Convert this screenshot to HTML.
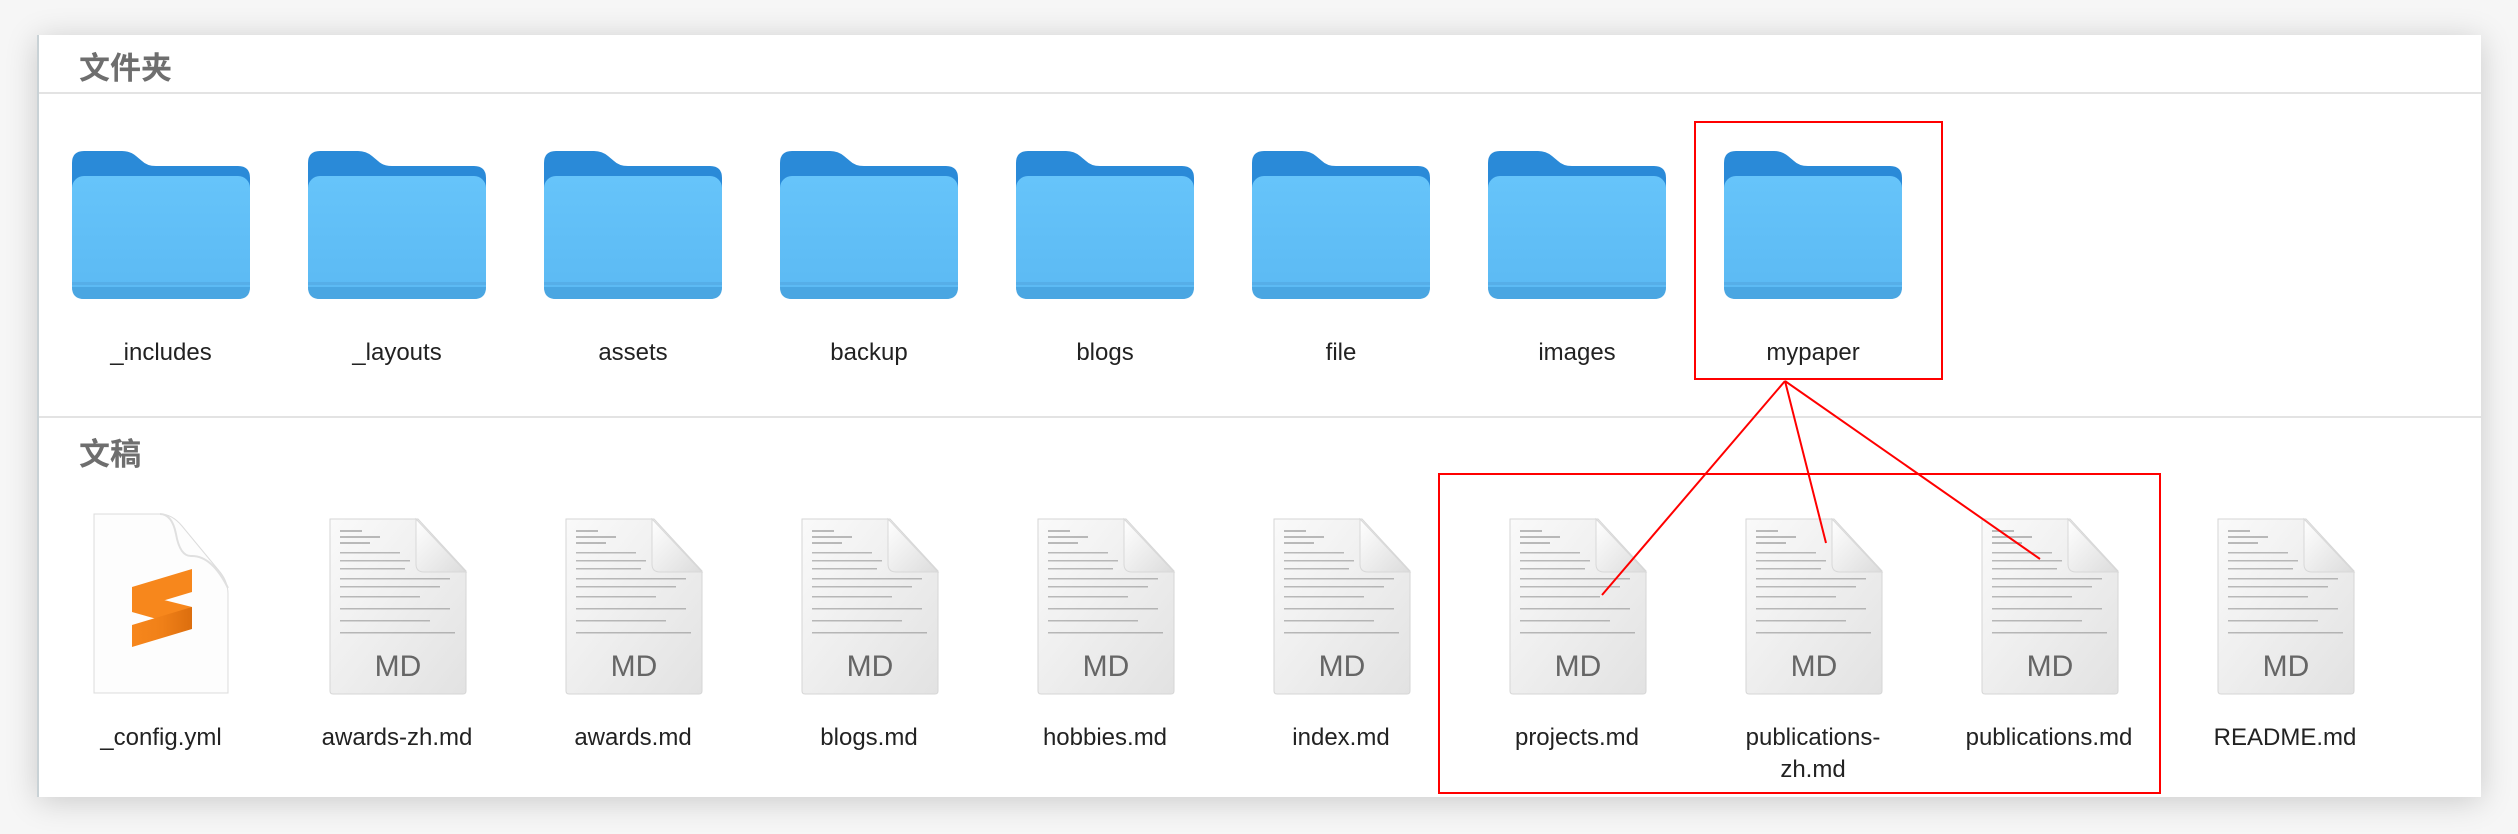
<!DOCTYPE html>
<html><head><meta charset="utf-8"><style>
*{margin:0;padding:0;box-sizing:border-box}
body{width:2518px;height:834px;background:#f6f6f6;position:relative;overflow:hidden;font-family:"Liberation Sans","Noto Sans CJK SC",sans-serif}
.win{position:absolute;left:37px;top:35px;width:2444px;height:762px;background:#fff;box-shadow:0 4px 30px rgba(0,0,0,.18);border-left:2px solid #c9d2d6}
.h{position:absolute;left:40px;font-size:31px;font-weight:bold;color:#6e6e6e}
.sep{position:absolute;left:0;right:0;height:2px;background:#e3e3e3}
.it{position:absolute;width:236px;text-align:center;font-size:24px;color:#222;line-height:32px}
.ic{position:absolute}
</style></head><body>
<svg width="0" height="0" style="position:absolute">
<defs>
<linearGradient id="fg" x1="0" y1="0" x2="0" y2="1"><stop offset="0" stop-color="#66c4fa"/><stop offset="1" stop-color="#5bb9f3"/></linearGradient>
<linearGradient id="dg" x1="0" y1="0" x2="1" y2="1"><stop offset="0" stop-color="#fafafa"/><stop offset="1" stop-color="#e2e2e2"/></linearGradient>
<linearGradient id="cg" x1="0" y1="0" x2="1" y2="1"><stop offset="0" stop-color="#ffffff"/><stop offset="1" stop-color="#dcdcdc"/></linearGradient>
<linearGradient id="og" x1="0" y1="0" x2="1" y2="0"><stop offset="0" stop-color="#f7871c"/><stop offset=".5" stop-color="#f08018"/><stop offset="1" stop-color="#dc6e0e"/></linearGradient>
<symbol id="folder" viewBox="0 0 178 149">
<path d="M0 12 Q0 0 12 0 H50 Q58 0 64 5 L70 10 Q75 15 84 15 H166 Q178 15 178 27 V60 H0Z" fill="#2a8ad8"/>
<rect x="0" y="25" width="178" height="123" rx="12" fill="url(#fg)"/>
<rect x="0" y="131" width="178" height="3" fill="#56aee8"/>
<path d="M0 136 H178 V136 Q178 148 166 148 H12 Q0 148 0 136Z" fill="#4aa6e2"/>
</symbol>
<symbol id="doc" viewBox="0 0 140 180">
<path d="M2 3 H90 L138 55 V175 Q138 178 135 178 H5 Q2 178 2 175Z" fill="url(#dg)" stroke="#d6d6d6" stroke-width="1"/>
<path d="M88 3 V48 Q88 56 96 56 H138 Z" fill="url(#cg)" stroke="#d8d8d8"/>
<g fill="#888" opacity=".55">
<rect x="12" y="14" width="22" height="2"/><rect x="12" y="20" width="40" height="2"/><rect x="12" y="26" width="30" height="2"/>
<rect x="12" y="36" width="60" height="1.5"/><rect x="12" y="44" width="70" height="1.5"/><rect x="12" y="52" width="65" height="1.5"/>
<rect x="12" y="62" width="110" height="1.5"/><rect x="12" y="70" width="100" height="1.5"/><rect x="12" y="80" width="80" height="1.5"/>
<rect x="12" y="92" width="110" height="1.5"/><rect x="12" y="104" width="90" height="1.5"/><rect x="12" y="116" width="115" height="1.5"/>
</g>
<text x="70" y="160" font-family="Liberation Sans,sans-serif" font-size="30" fill="#666" text-anchor="middle">MD</text>
</symbol>
</defs></svg>
<div class="win">
<div class="h" style="top:8px">文件夹</div>
<div class="sep" style="top:57px"></div>
<div class="h" style="top:394px">文稿</div>
<div class="sep" style="top:381px"></div>
</div>
<!-- folders -->
<svg class="ic" style="left:72px;top:151px" width="178" height="149"><use href="#folder"/></svg>
<svg class="ic" style="left:308px;top:151px" width="178" height="149"><use href="#folder"/></svg>
<svg class="ic" style="left:544px;top:151px" width="178" height="149"><use href="#folder"/></svg>
<svg class="ic" style="left:780px;top:151px" width="178" height="149"><use href="#folder"/></svg>
<svg class="ic" style="left:1016px;top:151px" width="178" height="149"><use href="#folder"/></svg>
<svg class="ic" style="left:1252px;top:151px" width="178" height="149"><use href="#folder"/></svg>
<svg class="ic" style="left:1488px;top:151px" width="178" height="149"><use href="#folder"/></svg>
<svg class="ic" style="left:1724px;top:151px" width="178" height="149"><use href="#folder"/></svg>
<div class="it" style="left:43px;top:337px">_includes</div>
<div class="it" style="left:279px;top:337px">_layouts</div>
<div class="it" style="left:515px;top:337px">assets</div>
<div class="it" style="left:751px;top:337px">backup</div>
<div class="it" style="left:987px;top:337px">blogs</div>
<div class="it" style="left:1223px;top:337px">file</div>
<div class="it" style="left:1459px;top:337px">images</div>
<div class="it" style="left:1695px;top:337px">mypaper</div>
<!-- config -->
<svg class="ic" style="left:92px;top:512px" width="140" height="184" viewBox="0 0 140 184">
<path d="M2 2 H68 Q80 2 90 14 L128 60 Q136 70 136 82 V181 H2Z" fill="#fdfdfd" stroke="#dcdcdc"/>
<path d="M68 2 Q80 2 84 22 Q88 45 100 44 Q120 44 136 76" fill="none" stroke="#e0e0e0" stroke-width="2"/>
<path d="M40 80 L100 95 V117 L40 100Z" fill="#f7871c"/>
<path d="M40 75 L100 57 V80 L40 98Z" fill="#f7871c"/>
<path d="M40 113 L100 95 V117 L40 135Z" fill="url(#og)"/>
</svg>
<svg class="ic" style="left:328px;top:516px" width="140" height="180"><use href="#doc"/></svg>
<svg class="ic" style="left:564px;top:516px" width="140" height="180"><use href="#doc"/></svg>
<svg class="ic" style="left:800px;top:516px" width="140" height="180"><use href="#doc"/></svg>
<svg class="ic" style="left:1036px;top:516px" width="140" height="180"><use href="#doc"/></svg>
<svg class="ic" style="left:1272px;top:516px" width="140" height="180"><use href="#doc"/></svg>
<svg class="ic" style="left:1508px;top:516px" width="140" height="180"><use href="#doc"/></svg>
<svg class="ic" style="left:1744px;top:516px" width="140" height="180"><use href="#doc"/></svg>
<svg class="ic" style="left:1980px;top:516px" width="140" height="180"><use href="#doc"/></svg>
<svg class="ic" style="left:2216px;top:516px" width="140" height="180"><use href="#doc"/></svg>
<div class="it" style="left:43px;top:722px">_config.yml</div>
<div class="it" style="left:279px;top:722px">awards-zh.md</div>
<div class="it" style="left:515px;top:722px">awards.md</div>
<div class="it" style="left:751px;top:722px">blogs.md</div>
<div class="it" style="left:987px;top:722px">hobbies.md</div>
<div class="it" style="left:1223px;top:722px">index.md</div>
<div class="it" style="left:1459px;top:722px">projects.md</div>
<div class="it" style="left:1695px;top:722px">publications-<br>zh.md</div>
<div class="it" style="left:1931px;top:722px">publications.md</div>
<div class="it" style="left:2167px;top:722px">README.md</div>
<!-- annotations -->
<svg class="ic" style="left:0;top:0" width="2518" height="834">
<g fill="none" stroke="#f00" stroke-width="2">
<rect x="1695" y="122" width="247" height="257"/>
<rect x="1439" y="474" width="721" height="319"/>
<path d="M1785 381 L1602 595 M1785 381 L1826 543 M1785 381 L2040 559"/>
</g></svg>
</body></html>
